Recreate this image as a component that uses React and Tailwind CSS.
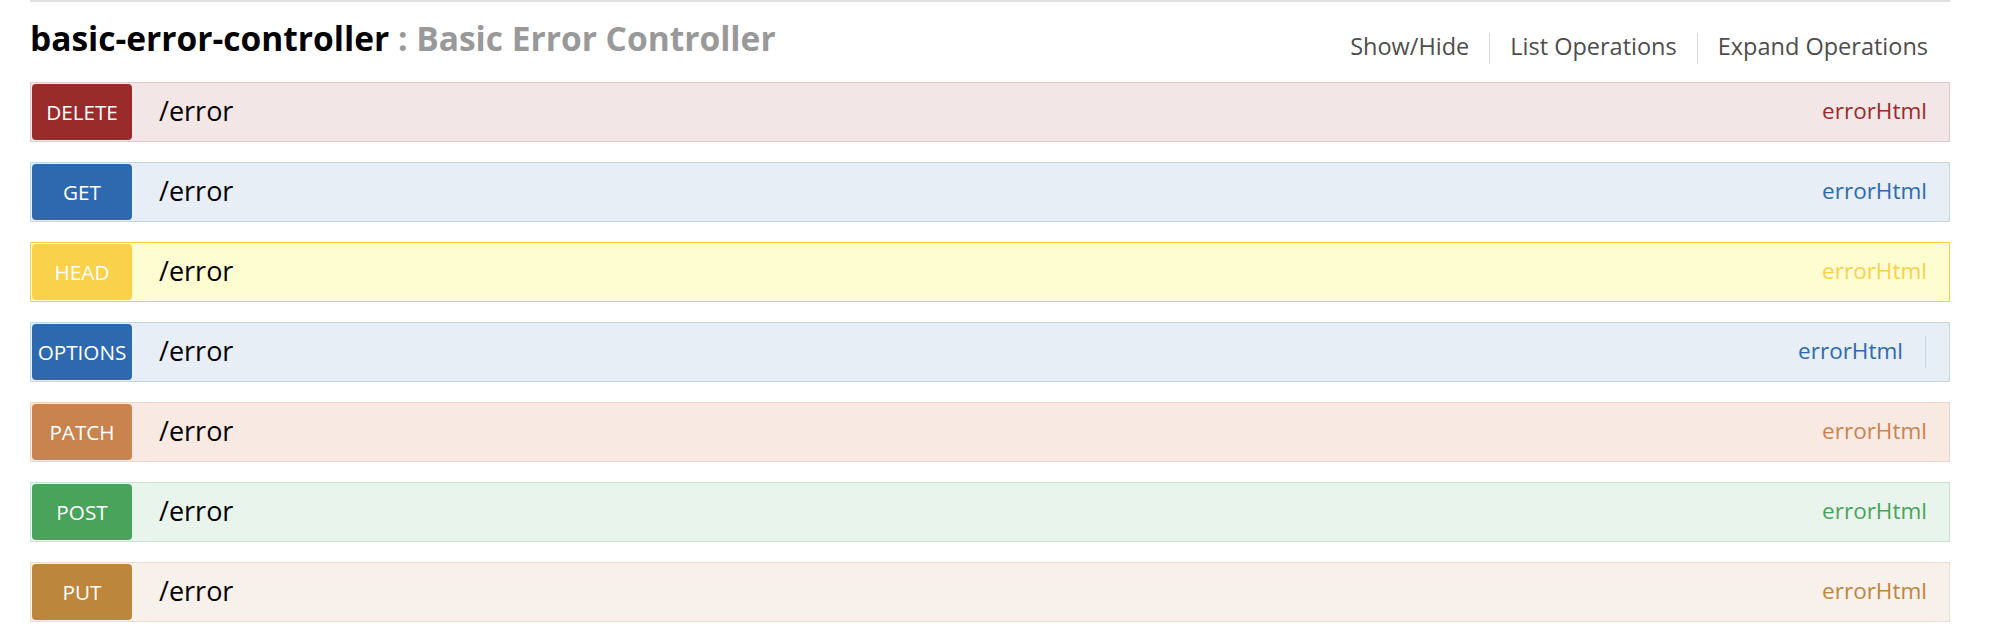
import React from "react";

const rows = [
  { m: "DELETE", badge: "bg-[#992b2b]", row: "bg-[#f2e6e7] border-[#e6c6c8]", txt: "text-[#992b2b]" },
  { m: "GET", badge: "bg-[#2e69b0]", row: "bg-[#e7eef6] border-[#c4d6ea]", txt: "text-[#2e69b0]" },
  { m: "HEAD", badge: "bg-[#f9d14b]", row: "bg-[#fdfdd1] border-[#f9cf4a]", txt: "text-[#f9d14b]" },
  { m: "OPTIONS", badge: "bg-[#2e69b0]", row: "bg-[#e7eef6] border-[#c4d6ea]", txt: "text-[#2e69b0]", sep: true },
  { m: "PATCH", badge: "bg-[#c8834f]", row: "bg-[#f8eae3] border-[#efd5c7]", txt: "text-[#c8834f]" },
  { m: "POST", badge: "bg-[#4aa35a]", row: "bg-[#e9f4ec] border-[#c5e6d1]", txt: "text-[#4aa35a]" },
  { m: "PUT", badge: "bg-[#bc873d]", row: "bg-[#f8f0ea] border-[#ecdecc]", txt: "text-[#bc873d]" },
];

export default function App() {
  return (
    <div className="min-h-[638px] bg-white pl-[30px] pr-[40px] font-['Open_Sans',_'Liberation_Sans',_sans-serif]">
      <div className="border-t-2 border-[#e0e0e0]">
        <div className="flex h-[80px] justify-between">
          <h2 className="mt-[19px] text-[33.5px] font-bold leading-[34px] text-black">
            basic-error-controller <span className="text-[#999999]">: Basic Error Controller</span>
          </h2>
          <ul className="mt-[31px] flex text-[23.5px] text-[#4d4d4d]">
            <li className="h-[31px] pr-[20px] leading-[27px]">Show/Hide</li>
            <li className="h-[31px] border-l border-[#dddddd] px-[20px] leading-[27px]">List Operations</li>
            <li className="h-[31px] border-l border-[#dddddd] pl-[20px] pr-[22px] leading-[27px]">Expand Operations</li>
          </ul>
        </div>
        <div className="flex flex-col gap-[20px]">
          {rows.map((r) => (
            <div key={r.m} className={`flex h-[60px] items-center border p-[1px] ${r.row}`}>
              <div className={`flex h-[56px] w-[100px] items-center justify-center rounded-[4px] pt-[2px] text-[20.7px] text-white ${r.badge}`}>
                {r.m}
              </div>
              <div className="ml-[27px] pb-[2px] text-[27px] text-black">/error</div>
              <div className={`ml-auto pb-[3px] text-[22.5px] ${r.txt} ${r.sep ? "" : "mr-[21px]"}`}>errorHtml</div>
              {r.sep && <div className="ml-[22px] mr-[22px] h-[32px] w-px bg-[#c4d6ea]" />}
            </div>
          ))}
        </div>
      </div>
    </div>
  );
}
